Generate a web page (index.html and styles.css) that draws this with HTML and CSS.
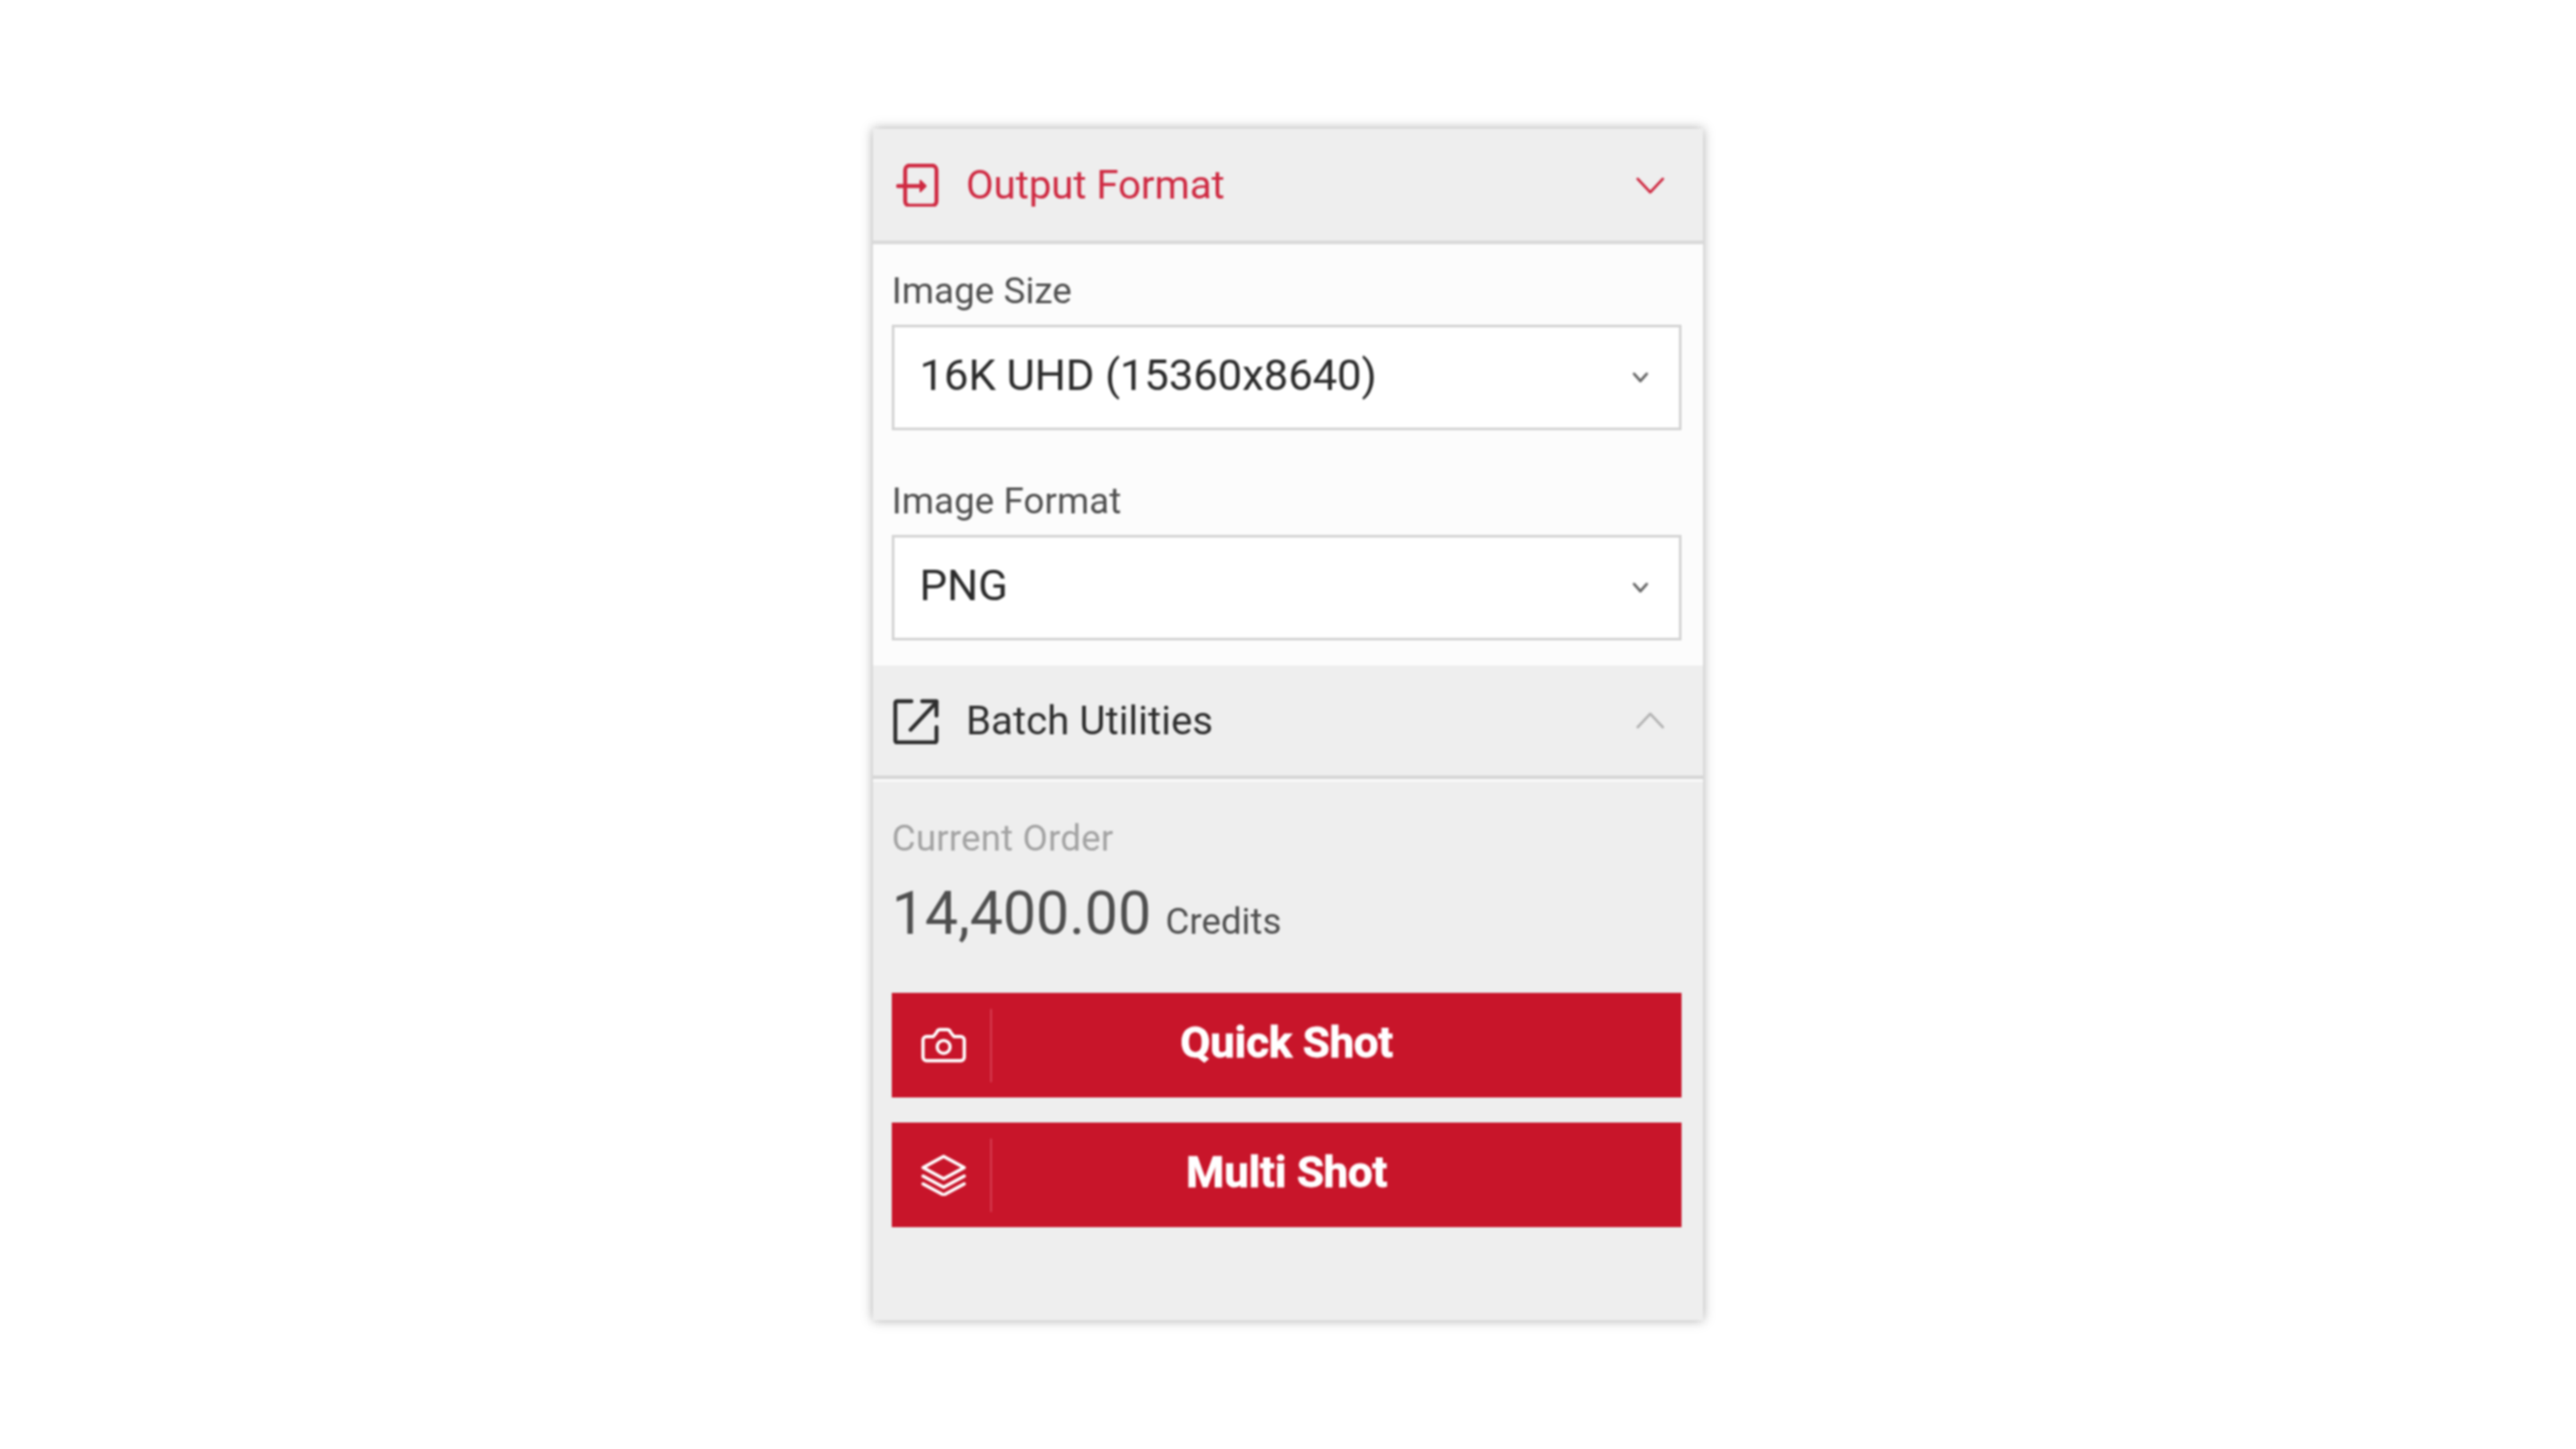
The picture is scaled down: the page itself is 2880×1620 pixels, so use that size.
FILE: index.html
```html
<!DOCTYPE html>
<html lang="en">
<head>
<meta charset="utf-8">
<title>Output Format</title>
<link rel="stylesheet" href="styles.css">
</head>
<body>
<aside class="panel">
  <header class="section-head section-head--active">
    <svg class="head-icon" viewBox="0 0 48 48" width="48" height="48" fill="none" stroke="currentColor" stroke-width="4.4" stroke-linecap="round" stroke-linejoin="round">
      <rect x="10" y="2" width="35" height="45" rx="5"/>
      <path d="M2 25h26"/>
      <path d="M27 19l6 6-6 6z" fill="currentColor" stroke-width="2"/>
    </svg>
    <span class="head-title">Output Format</span>
    <svg class="head-chevron" viewBox="0 0 32 20" width="32" height="20" fill="none" stroke="currentColor" stroke-width="3" stroke-linecap="round" stroke-linejoin="round"><path d="M2 3l14 15L30 3"/></svg>
  </header>
  <section class="form-body">
    <div class="field">
      <label class="field-label">Image Size</label>
      <div class="select">
        <span class="select-value">16K UHD (15360x8640)</span>
        <svg class="select-chevron" viewBox="0 0 18 14" width="18" height="14" fill="none" stroke="currentColor" stroke-width="3" stroke-linecap="round" stroke-linejoin="round"><path d="M2 3l7 8 7-8"/></svg>
      </div>
    </div>
    <div class="field">
      <label class="field-label">Image Format</label>
      <div class="select">
        <span class="select-value">PNG</span>
        <svg class="select-chevron" viewBox="0 0 18 14" width="18" height="14" fill="none" stroke="currentColor" stroke-width="3" stroke-linecap="round" stroke-linejoin="round"><path d="M2 3l7 8 7-8"/></svg>
      </div>
    </div>
  </section>
  <header class="section-head section-head--batch">
    <svg class="head-icon" viewBox="0 0 52 52" width="52" height="52" fill="none" stroke="currentColor" stroke-width="4.4" stroke-linecap="round" stroke-linejoin="round">
      <path d="M21 4H5a2 2 0 0 0-2 2v42a2 2 0 0 0 2 2h42a2 2 0 0 0 2-2V33"/>
      <path d="M20 36L49 5"/>
      <path d="M33 4h16v16"/>
    </svg>
    <span class="head-title">Batch Utilities</span>
    <svg class="head-chevron head-chevron--muted" viewBox="0 0 32 20" width="32" height="20" fill="none" stroke="currentColor" stroke-width="3" stroke-linecap="round" stroke-linejoin="round"><path d="M2 17L16 2l14 15"/></svg>
  </header>
  <section class="order">
    <div class="order-label">Current Order</div>
    <div class="order-total"><span class="order-amount">14,400.00</span><span class="order-unit">Credits</span></div>
    <button class="shot-btn" type="button">
      <span class="shot-icon">
        <svg viewBox="0 0 52 40" width="50" height="39" fill="none" stroke="currentColor" stroke-width="3.8" stroke-linecap="round" stroke-linejoin="round">
          <path d="M6 10h8l4-5q1-3 4-3h8q3 0 4 3l4 5h8a4 4 0 0 1 4 4v20a4 4 0 0 1-4 4H6a4 4 0 0 1-4-4V14a4 4 0 0 1 4-4z"/>
          <circle cx="26" cy="22" r="7.5"/>
        </svg>
      </span>
      <span class="shot-label">Quick Shot</span>
    </button>
    <button class="shot-btn" type="button">
      <span class="shot-icon">
        <svg viewBox="0 0 52 48" width="50" height="46" fill="none" stroke="currentColor" stroke-width="3.8" stroke-linecap="round" stroke-linejoin="round">
          <path d="M26 2L50 15 26 28 2 15z"/>
          <path d="M2 25l24 13 24-13"/>
          <path d="M2 34l24 13 24-13"/>
        </svg>
      </span>
      <span class="shot-label">Multi Shot</span>
    </button>
  </section>
</aside>
</body>
</html>
```
FILE: styles.css
```css
* { box-sizing: border-box; }
html, body { margin: 0; background: #fff; }
body {
  height: 1620px;
  overflow: hidden;
  padding-top: 144px;
  font-family: Roboto, "Liberation Sans", sans-serif;
}
.panel {
  width: 928px;
  height: 1332px;
  margin: 0 auto;
  background: #eee;
  box-shadow: 0 0 12px rgba(0, 0, 0, .34);
  display: flex;
  flex-direction: column;
  filter: blur(.85px);
}
.section-head {
  display: flex;
  align-items: center;
  background: #eee;
  border-bottom: 4px solid #d9d9d9;
  color: #2e2e2e;
}
.section-head--active { height: 129px; color: #cf2a42; padding: 0 43px 0 26px; }
.section-head--batch { height: 127px; padding: 0 43px 0 22px; border-bottom-color: #d6d6d6; }
.head-icon { flex: none; }
.section-head--active .head-title { margin-left: 30px; letter-spacing: -.1px; }
.section-head--batch .head-title { margin-left: 30px; }
.head-title { flex: 1; font-size: 45px; line-height: 52px; }
.head-chevron { flex: none; }
.head-chevron--muted { color: #b4b4b4; }
.form-body {
  background: #fcfcfc;
  padding: 24px 0 0 21px;
  height: 471px;
  display: flex;
  flex-direction: column;
  gap: 51px;
}
.field-label {
  display: block;
  font-size: 41px;
  letter-spacing: .1px;
  line-height: 56px;
  color: #4f4f4f;
  margin-bottom: 10px;
}
.select {
  width: 883px;
  height: 118px;
  background: #fff;
  border: 3px solid #d4d4d4;
  display: flex;
  align-items: center;
  padding: 0 34px 0 28px;
  color: #2b2b2b;
}
.select-value { flex: 1; font-size: 49px; letter-spacing: -.2px; line-height: 60px; margin-top: -4px; }
.select-chevron { color: #666; flex: none; }
.order {
  flex: 1;
  background: #eee;
  border-top: 3px solid #fafafa;
  padding: 35px 21px 0;
}
.order-label { font-size: 41px; letter-spacing: .2px; line-height: 56px; color: #a3a3a3; }
.order-total {
  display: flex;
  align-items: baseline;
  gap: 16px;
  margin-top: 18px;
  margin-bottom: 49px;
  color: #4f4f4f;
}
.order-amount { font-size: 66px; line-height: 78px; }
.order-unit { font-size: 41px; }
.shot-btn {
  display: flex;
  width: 883px;
  height: 117px;
  padding: 0;
  margin: 0 0 28px;
  border: 0;
  border-radius: 0;
  background: #c8152a;
  color: #fff;
  font-family: inherit;
  box-shadow: 0 0 3px #e8f6f6;
  align-items: center;
}
.shot-icon {
  flex: none;
  width: 112px;
  height: 82px;
  padding-left: 5px;
  display: flex;
  align-items: center;
  justify-content: center;
  border-right: 2px solid #d63d50;
}
.shot-label {
  flex: 1;
  margin-left: -112px;
  font-size: 49px;
  font-weight: 700;
  letter-spacing: -.2px;
  -webkit-text-stroke: .9px #fff;
  line-height: 60px;
  text-align: center;
  margin-top: -6px;
}
```
